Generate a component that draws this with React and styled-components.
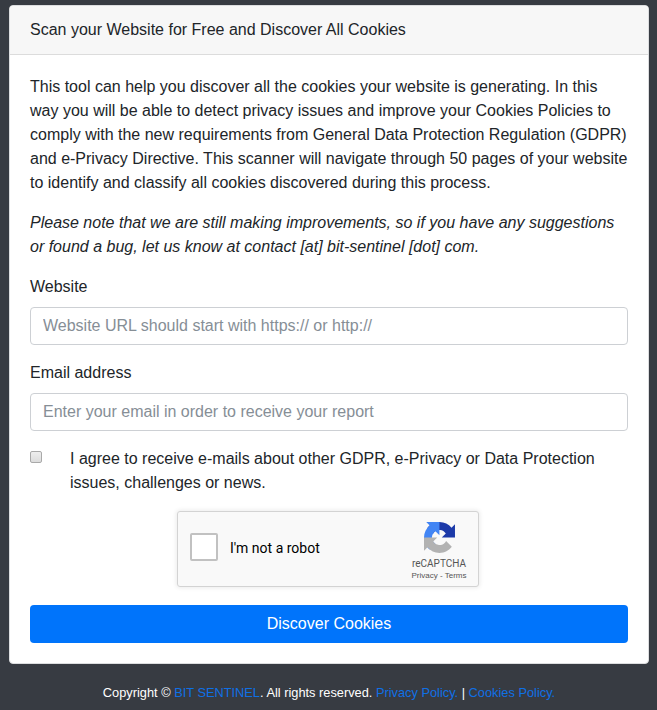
import React from "react";
import styled, { createGlobalStyle } from "styled-components";

const GlobalStyle = createGlobalStyle`
  *, *::before, *::after { box-sizing: border-box; }
  html, body { margin: 0; background: #373b42; }
  body {
    font-family: "Liberation Sans", Arial, sans-serif;
    font-size: 16px;
    line-height: 24px;
    color: #212529;
  }
`;

const Page = styled.div`
  height: 710px;
  padding: 5px 8px 0 9px;
  overflow: hidden;
  background: #373b42;
`;

const Card = styled.main`
  width: 640px;
  border: 1px solid #dcdddf;
  border-radius: 4px;
  background: #fff;
  overflow: hidden;
`;

const CardHeader = styled.header`
  padding: 12px 20px;
  background: #f7f7f7;
  border-bottom: 1px solid #dcdcdc;
`;

const CardBody = styled.form`
  padding: 20px;
`;

const Paragraph = styled.p`
  margin: 0 0 16px;
  white-space: nowrap;
  font-style: ${({ $italic }) => ($italic ? "italic" : "normal")};
`;

const Field = styled.div`
  display: flex;
  flex-direction: column;
  gap: 8px;
  margin-bottom: 16px;
`;

const Input = styled.input`
  width: 100%;
  height: 38px;
  padding: 6px 12px;
  border: 1px solid #cdd0d4;
  border-radius: 4px;
  background: #fff;
  color: #495057;
  font: inherit;
  &::placeholder {
    color: #868e96;
    opacity: 1;
  }
`;

const Consent = styled.label`
  display: flex;
  align-items: flex-start;
  gap: 28px;
  margin-bottom: 16px;
`;

const ConsentBox = styled.input`
  appearance: none;
  flex: none;
  width: 12px;
  height: 12px;
  margin: 4px 0 0;
  border: 1px solid #a9a9a9;
  border-radius: 2px;
  background: linear-gradient(#eeeeee, #dcdcdc);
`;

const Captcha = styled.div`
  display: flex;
  justify-content: space-between;
  width: 302px;
  height: 76px;
  margin: 0 auto 18px 147px;
  border: 1px solid #d3d3d3;
  border-radius: 3px;
  background: #f9f9f9;
  box-shadow: 0 0 4px 1px rgba(0, 0, 0, 0.08);
  font-family: Roboto, sans-serif;
`;

const CaptchaCheck = styled.label`
  display: flex;
  align-items: flex-start;
  gap: 12px;
  padding: 21px 0 0 12px;
  font-size: 14px;
  line-height: 30px;
  color: #000;
`;

const CaptchaBox = styled.input`
  appearance: none;
  width: 28px;
  height: 28px;
  margin: 0;
  border: 2px solid #c1c1c1;
  border-radius: 2px;
  background: #fff;
`;

const CaptchaBrand = styled.div`
  display: flex;
  flex-direction: column;
  align-items: center;
  width: 78px;
  padding-top: 10px;
  color: #555;
`;

const BrandName = styled.span`
  margin-top: 5px;
  font-size: 10px;
  line-height: 12px;
`;

const BrandLinks = styled.span`
  margin-top: 1px;
  font-family: "Liberation Sans", Arial, sans-serif;
  font-size: 8px;
  line-height: 10px;
  white-space: pre;
`;

const SubmitButton = styled.button`
  display: block;
  width: 100%;
  height: 38px;
  padding: 6px 12px;
  border: 0;
  border-radius: 4px;
  background: #0074fb;
  color: #fff;
  font: inherit;
`;

const Footer = styled.footer`
  padding-top: 17px;
  font-size: 12.8px;
  text-align: center;
  color: #fff;
`;

const FooterLink = styled.a`
  color: #0f70e6;
  text-decoration: none;
`;

function CaptchaLogo() {
  return (
    <svg width="31" height="31" viewBox="0 0 64 64" aria-hidden="true">
      <path
        fill="#1c3aa9"
        d="M64 31.955l-.033-1.37V4.687l-7.16 7.16C50.948 4.674 42.033.093 32.05.093c-10.4 0-19.622 4.96-25.458 12.64l11.736 11.86a15.55 15.55 0 0 1 4.754-5.334c2.05-1.6 4.952-2.906 8.968-2.906.485 0 .86.057 1.135.163 4.976.393 9.288 3.14 11.828 7.124l-8.307 8.307L64 31.953"
      />
      <path
        fill="#4285f4"
        d="M31.862.094l-1.37.033H4.594l7.16 7.16C4.58 13.147 0 22.06 0 32.046c0 10.4 4.96 19.622 12.64 25.458L24.5 45.768a15.55 15.55 0 0 1-5.334-4.754c-1.6-2.05-2.906-4.952-2.906-8.968 0-.485.057-.86.163-1.135.393-4.976 3.14-9.288 7.124-11.828l8.307 8.307L31.86.095"
      />
      <path
        fill="#b2b2b2"
        d="M.001 32.045l.033 1.37v25.898l7.16-7.16c5.86 7.173 14.774 11.754 24.76 11.754 10.4 0 19.622-4.96 25.458-12.64l-11.736-11.86a15.55 15.55 0 0 1-4.754 5.334c-2.05 1.6-4.952 2.906-8.968 2.906-.485 0-.86-.057-1.135-.163-4.976-.393-9.288-3.14-11.828-7.124l8.307-8.307c-10.522.04-22.4.066-27.295-.005"
      />
    </svg>
  );
}

export default function App() {
  return (
    <>
      <GlobalStyle />
      <Page>
        <Card>
          <CardHeader>Scan your Website for Free and Discover All Cookies</CardHeader>
          <CardBody>
            <Paragraph>
              This tool can help you discover all the cookies your website is generating. In this
              <br />
              way you will be able to detect privacy issues and improve your Cookies Policies to
              <br />
              comply with the new requirements from General Data Protection Regulation (GDPR)
              <br />
              and e-Privacy Directive. This scanner will navigate through 50 pages of your website
              <br />
              to identify and classify all cookies discovered during this process.
            </Paragraph>
            <Paragraph $italic>
              Please note that we are still making improvements, so if you have any suggestions
              <br />
              or found a bug, let us know at contact [at] bit-sentinel [dot] com.
            </Paragraph>
            <Field>
              <label htmlFor="website">Website</label>
              <Input id="website" placeholder="Website URL should start with https:// or http://" />
            </Field>
            <Field>
              <label htmlFor="email">Email address</label>
              <Input id="email" placeholder="Enter your email in order to receive your report" />
            </Field>
            <Consent>
              <ConsentBox type="checkbox" />
              <span>
                I agree to receive e-mails about other GDPR, e-Privacy or Data Protection
                <br />
                issues, challenges or news.
              </span>
            </Consent>
            <Captcha>
              <CaptchaCheck>
                <CaptchaBox type="checkbox" />
                I'm not a robot
              </CaptchaCheck>
              <CaptchaBrand>
                <CaptchaLogo />
                <BrandName>reCAPTCHA</BrandName>
                <BrandLinks>Privacy - Terms</BrandLinks>
              </CaptchaBrand>
            </Captcha>
            <SubmitButton type="button">Discover Cookies</SubmitButton>
          </CardBody>
        </Card>
        <Footer>
          Copyright © <FooterLink>BIT SENTINEL</FooterLink>. All rights reserved.{" "}
          <FooterLink>Privacy Policy.</FooterLink> | <FooterLink>Cookies Policy.</FooterLink>
        </Footer>
      </Page>
    </>
  );
}
